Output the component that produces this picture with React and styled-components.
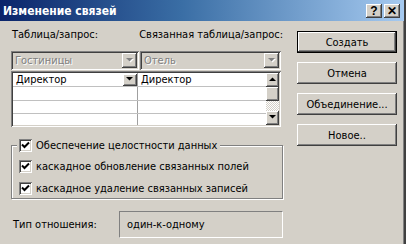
import React from 'react';
import styled, {createGlobalStyle} from "styled-components";

const GlobalStyle = createGlobalStyle`
  html, body {
    margin: 0;
    padding: 0;
    background: #d4d0c8;
  }
  body {
    font-family: "DejaVu Sans Condensed", "Liberation Sans", sans-serif;
    font-size: 11px;
    color: #000;
  }
`

const raised = `
  box-shadow: inset -1px -1px #404040, inset 1px 1px #fff, inset -2px -2px #808080, inset 2px 2px #d4d0c8;
`

const sunken = `
  box-shadow: inset 1px 1px #808080, inset -1px -1px #fff, inset 2px 2px #404040, inset -2px -2px #d4d0c8;
`

const Window = styled.div`
  width: 406px;
  height: 244px;
  box-sizing: border-box;
  background: #d4d0c8;
  border-right: 2px solid #404040;
  box-shadow: inset -1px 0 #808080;
  overflow: hidden;
`

const TitleBar = styled.div`
  height: 21px;
  display: flex;
  align-items: center;
  justify-content: space-between;
  padding: 0 4px 0 3px;
  background: linear-gradient(to right, #0a246a 0%, #3a6ea5 45%, #a6caf0 100%);
`

const Caption = styled.div`
  color: #fff;
  font-family: "DejaVu Sans Condensed", "Liberation Sans", sans-serif;
  font-weight: bold;
  font-size: 12px;
`

const CaptionButtons = styled.div`
  display: flex;
  gap: 2px;
`

const CapBtn = styled.div`
  width: 16px;
  height: 14px;
  background: #d4d0c8;
  ${raised};
  display: flex;
  align-items: center;
  justify-content: center;
  font-family: "Liberation Sans", sans-serif;
  font-weight: bold;
  font-size: 12px;
  line-height: 1;
`

const Body = styled.div`
  display: flex;
  padding: 0 0 0 11px;
  gap: 14px;
`

const LeftCol = styled.div`
  width: 272px;
  display: flex;
  flex-direction: column;
`

const RightCol = styled.div`
  width: 100px;
  display: flex;
  flex-direction: column;
  gap: 9px;
  padding-top: 10px;
`

const Labels = styled.div`
  display: flex;
  margin-top: 7px;
  height: 14px;
  line-height: 14px;
  white-space: nowrap;
  & > div:first-child {
    width: 129px;
    padding-left: 1px;
  }
`

const Combos = styled.div`
  display: flex;
  gap: 1px;
  margin-top: 9px;
`

const Combo = styled.div`
  width: ${p => p.$w}px;
  height: 19px;
  box-sizing: border-box;
  ${sunken};
  display: flex;
  align-items: center;
  padding: 2px;
`

const ComboText = styled.div`
  flex: 1;
  padding-left: 2px;
  color: #808080;
  text-shadow: 1px 1px 0 #fff;
`

const DropBtn = styled.div`
  width: ${p => p.$w || 15}px;
  height: ${p => p.$h || 15}px;
  background: #d4d0c8;
  ${raised};
  display: flex;
  align-items: center;
  justify-content: center;
  flex-shrink: 0;
`

const Grid = styled.div`
  height: 56px;
  width: 270px;
  margin-top: 1px;
  box-sizing: border-box;
  background: #fff;
  ${sunken};
  padding: 2px;
  display: flex;
`

const Rows = styled.div`
  flex: 1;
  display: flex;
  flex-direction: column;
`

const Row = styled.div`
  display: flex;
  height: ${p => p.$h || 14}px;
  border-bottom: ${p => p.$last ? 'none' : '1px solid #c0c0c0'};
`

const Cell = styled.div`
  width: ${p => p.$w}px;
  box-sizing: border-box;
  border-right: ${p => p.$div ? '1px solid #a0a0a0' : 'none'};
  display: flex;
  align-items: center;
  padding-left: 3px;
  line-height: 13px;
  & > span {
    flex: 1;
  }
`

const Scroll = styled.div`
  width: 13px;
  display: flex;
  flex-direction: column;
`

const Track = styled.div`
  flex: 1;
  background-color: #fff;
  background-image: repeating-conic-gradient(#d4d0c8 0 25%, #fff 0 50%);
  background-size: 2px 2px;
`

const Group = styled.fieldset`
  margin: 12px 0 0 0;
  padding: 8px 0 3px 7px;
  border: 1px solid #808080;
  box-shadow: 1px 1px 0 #fff, inset 1px 1px 0 #fff;
  width: 272px;
  box-sizing: border-box;
  display: flex;
  flex-direction: column;
  gap: 9px;
`

const Legend = styled.legend`
  margin-left: -2px;
  padding: 0 3px 0 2px;
  background: #d4d0c8;
`

const Check = styled.label`
  display: flex;
  align-items: center;
  gap: 4px;
  height: 13px;
  line-height: 13px;
`

const Box = styled.span`
  width: 13px;
  height: 13px;
  box-sizing: border-box;
  background: #fff;
  ${sunken};
  display: flex;
  align-items: center;
  justify-content: center;
`

const RelRow = styled.div`
  display: flex;
  align-items: center;
  margin-top: 12px;
  padding-left: 2px;
`

const RelLabel = styled.div`
  width: 106px;
`

const RelBox = styled.div`
  width: 164px;
  height: 27px;
  box-sizing: border-box;
  border: 1px solid;
  border-color: #808080 #fff #fff #808080;
  display: flex;
  align-items: center;
  padding-left: 7px;
`

const Button = styled.div`
  height: 22px;
  box-sizing: border-box;
  background: #d4d0c8;
  display: flex;
  align-items: center;
  justify-content: center;
  ${p => p.$default
    ? `border: 1px solid #000; box-shadow: inset -1px -1px #404040, inset 1px 1px #fff, inset -2px -2px #808080;`
    : `box-shadow: inset -1px -1px #404040, inset 1px 1px #fff, inset -2px -2px #808080, inset 2px 2px #d4d0c8;`}
`

const Arrow = ({down = true, disabled}) => (
    <svg width="8" height="6" viewBox="0 0 8 6">
        {disabled && <polygon points={down ? "1,1 8,1 4.5,4.5" : "1,5 8,5 4.5,1.5"} fill="#fff"/>}
        <polygon points={down ? "0,0 7,0 3.5,3.5" : "0,4 7,4 3.5,0.5"} fill={disabled ? '#808080' : '#000'}/>
    </svg>
)

const Tick = () => (
    <svg width="9" height="9" viewBox="0 0 9 9">
        <path d="M1 3.5 L3.5 6 L8 1.5" stroke="#000" strokeWidth="2" fill="none"/>
    </svg>
)

const CheckItem = ({children}) => (
    <Check>
        <Box><Tick/></Box>
        {children}
    </Check>
)

const App = () => {
    return (
        <Window>
            <GlobalStyle/>
            <TitleBar>
                <Caption>Изменение связей</Caption>
                <CaptionButtons>
                    <CapBtn>?</CapBtn>
                    <CapBtn>✕</CapBtn>
                </CaptionButtons>
            </TitleBar>
            <Body>
                <LeftCol>
                    <Labels>
                        <div>Таблица/запрос:</div>
                        <div>Связанная таблица/запрос:</div>
                    </Labels>
                    <Combos>
                        <Combo $w={128}>
                            <ComboText>Гостиницы</ComboText>
                            <DropBtn><Arrow disabled/></DropBtn>
                        </Combo>
                        <Combo $w={141}>
                            <ComboText>Отель</ComboText>
                            <DropBtn><Arrow disabled/></DropBtn>
                        </Combo>
                    </Combos>
                    <Grid>
                        <Rows>
                            {[0, 1, 2, 3].map(i => (
                                <Row key={i} $last={i === 3} $h={i === 3 ? 11 : 13}>
                                    <Cell $w={125} $div>
                                        <span>{i === 0 ? 'Директор' : ''}</span>
                                        {i === 0 && <DropBtn $w={14} $h={12}><Arrow/></DropBtn>}
                                    </Cell>
                                    <Cell $w={128}>{i === 0 ? 'Директор' : ''}</Cell>
                                </Row>
                            ))}
                        </Rows>
                        <Scroll>
                            <DropBtn $w={13} $h={14}><Arrow down={false}/></DropBtn>
                            <DropBtn $w={13} $h={14}/>
                            <Track/>
                            <DropBtn $w={13} $h={14}><Arrow/></DropBtn>
                        </Scroll>
                    </Grid>
                    <Group>
                        <Legend><CheckItem>Обеспечение целостности данных</CheckItem></Legend>
                        <CheckItem>каскадное обновление связанных полей</CheckItem>
                        <CheckItem>каскадное удаление связанных записей</CheckItem>
                    </Group>
                    <RelRow>
                        <RelLabel>Тип отношения:</RelLabel>
                        <RelBox>один-к-одному</RelBox>
                    </RelRow>
                </LeftCol>
                <RightCol>
                    <Button $default>Создать</Button>
                    <Button>Отмена</Button>
                    <Button>Объединение...</Button>
                    <Button>Новое..</Button>
                </RightCol>
            </Body>
        </Window>
    );
};

export default App;
